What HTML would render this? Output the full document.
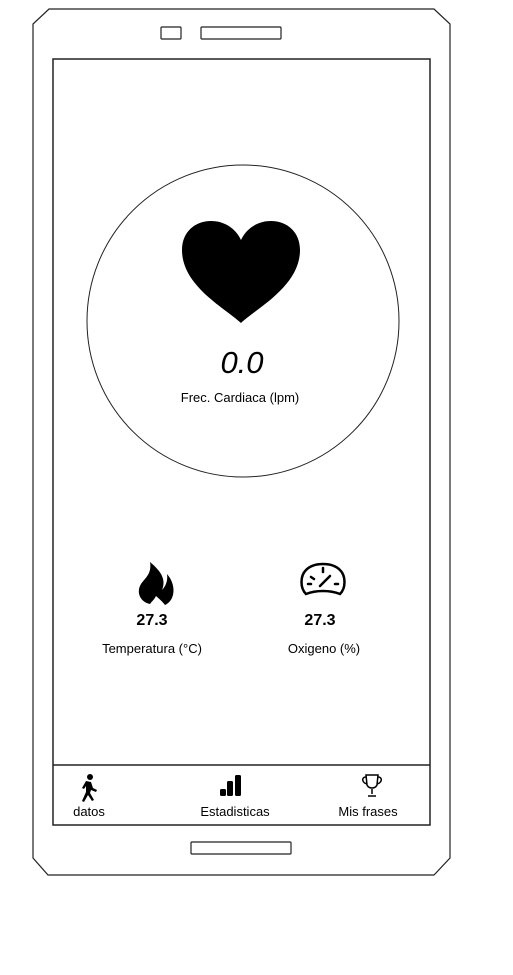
<!DOCTYPE html>
<html><head><meta charset="utf-8"><style>
html,body{margin:0;padding:0;background:#fff;width:513px;height:975px;overflow:hidden}
svg{display:block}
text{font-family:"Liberation Sans",sans-serif;fill:#000}
</style></head><body>
<svg width="513" height="975" viewBox="0 0 513 975" xmlns="http://www.w3.org/2000/svg">
<g fill="none" stroke="#222" stroke-width="1.2">
<path d="M49 9 L434 9 L450 24 L450 858 L434 875 L48 875 L33 858 L33 24 Z"/>
<rect x="161" y="27" width="20" height="12" rx="1"/>
<rect x="201" y="27" width="80" height="12" rx="1"/>
<rect x="53" y="59" width="377" height="766" stroke-width="1.5"/>
<line x1="53" y1="765" x2="430" y2="765" stroke-width="1.5"/>
<rect x="191" y="842" width="100" height="12" rx="1"/>
<circle cx="243" cy="321" r="156" stroke-width="1"/>
</g>
<!-- heart -->
<path d="M241 323 C225 308 182 286 182 250 C182 232 195 221 211 221 C225 221 236 229 241 240 C246 229 257 221 271 221 C287 221 300 232 300 250 C300 286 257 308 241 323 Z" fill="#000"/>
<text x="242" y="373" font-size="31" font-style="italic" text-anchor="middle">0.0</text>
<text x="240" y="402" font-size="13" text-anchor="middle">Frec. Cardiaca (lpm)</text>
<!-- fire -->
<path d="M150 562 C162 572 166 580 162 590 C166 586 168 580 167 574 C176 584 176 600 165 605 C161 600 158 598 156 596 C154 600 152 601 150 604 C140 602 136 592 141 584 C145 578 152 574 150 562 Z" fill="#000"/>
<!-- gauge -->
<g fill="none" stroke="#000" stroke-width="2.5" stroke-linecap="round">
<path d="M306 594 C300 588 300 576 306 570 C314 562 332 562 340 570 C346 576 346 588 340 594 C330 590 316 590 306 594 Z"/>
<line x1="323" y1="568" x2="323" y2="572"/>
<line x1="311" y1="577" x2="314" y2="579"/>
<line x1="308" y1="584" x2="311" y2="584"/>
<line x1="335" y1="584" x2="338" y2="584"/>
<line x1="320" y1="586" x2="330" y2="576"/>
</g>
<text x="152" y="625" font-size="16" font-weight="bold" text-anchor="middle">27.3</text>
<text x="320" y="625" font-size="16" font-weight="bold" text-anchor="middle">27.3</text>
<text x="152" y="653" font-size="13" text-anchor="middle">Temperatura (°C)</text>
<text x="324" y="653" font-size="13" text-anchor="middle">Oxigeno (%)</text>
<!-- walk icon -->
<g fill="#000"><circle cx="90" cy="777" r="3"/>
<path d="M86 781 L91 782 L93 788 L97 790 L96 792 L91 790 L90 793 L94 800 L92 801 L88 795 L84 802 L82 801 L86 792 L86 786 L84 789 L82 788 Z"/></g>
<!-- bars -->
<g fill="#000"><rect x="220" y="789" width="6" height="7" rx="1.5"/><rect x="227" y="781" width="6" height="15" rx="1.5"/><rect x="235" y="775" width="6" height="21" rx="1.5"/></g>
<!-- trophy -->
<g fill="none" stroke="#000" stroke-width="1.5"><path d="M366 775 L378 775 L377 785 C375 789 369 789 367 785 Z"/><path d="M366 777 C361 777 362 783 367 784 M378 777 C383 777 382 783 377 784"/><path d="M372 789 L372 794 M368 796 L376 796"/></g>
<text x="89" y="816" font-size="13" text-anchor="middle">datos</text>
<text x="235" y="816" font-size="13" text-anchor="middle">Estadisticas</text>
<text x="368" y="816" font-size="13" text-anchor="middle">Mis frases</text>
</svg>
</body></html>
